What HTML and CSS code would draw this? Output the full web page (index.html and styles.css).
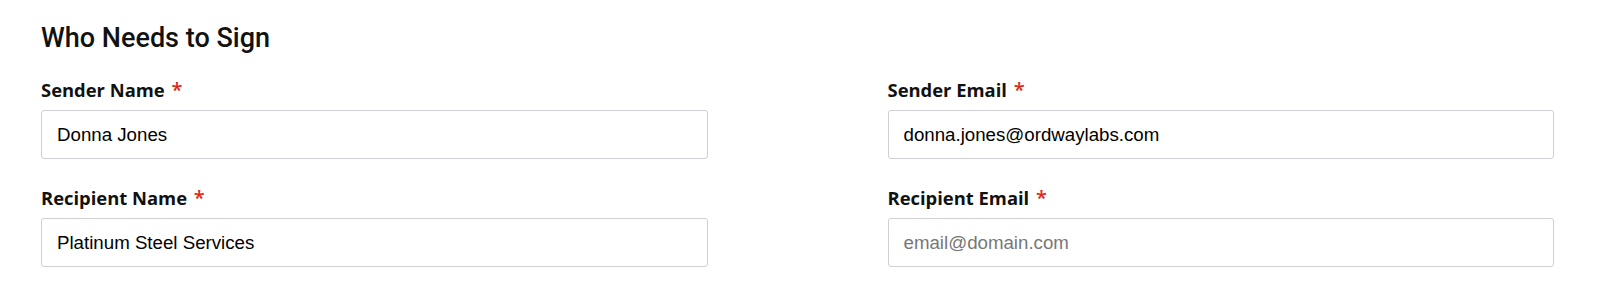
FILE: index.html
```html
<!DOCTYPE html>
<html lang="en">
<head>
<meta charset="utf-8">
<title>Who Needs to Sign</title>
<link rel="stylesheet" href="styles.css">
</head>
<body>
<section class="signers">
  <h2 class="signers-title">Who Needs to Sign</h2>
  <div class="signers-grid">
    <div class="field">
      <label class="field-label" for="sender-name">Sender Name <span class="req">*</span></label>
      <input class="field-input" id="sender-name" type="text" value="Donna Jones">
    </div>
    <div class="field">
      <label class="field-label" for="sender-email">Sender Email <span class="req">*</span></label>
      <input class="field-input" id="sender-email" type="email" value="donna.jones@ordwaylabs.com">
    </div>
    <div class="field">
      <label class="field-label" for="recipient-name">Recipient Name <span class="req">*</span></label>
      <input class="field-input" id="recipient-name" type="text" value="Platinum Steel Services">
    </div>
    <div class="field">
      <label class="field-label" for="recipient-email">Recipient Email <span class="req">*</span></label>
      <input class="field-input" id="recipient-email" type="email" placeholder="email@domain.com">
    </div>
  </div>
</section>
</body>
</html>
```

FILE: styles.css
```css
* {
  box-sizing: border-box;
}

html, body {
  margin: 0;
  background: #ffffff;
}

body {
  font-family: "Open Sans", "Liberation Sans", sans-serif;
  color: #111111;
}

.signers {
  padding: 22px 52px 0 41px;
}

.signers-title {
  margin: 0 0 24px;
  font-family: Roboto, "Liberation Sans", sans-serif;
  font-weight: 500;
  font-size: 27px;
  line-height: 32px;
  color: #111111;
}

.signers-grid {
  display: grid;
  grid-template-columns: 1fr 1fr;
  column-gap: 180px;
  row-gap: 27px;
}

.field {
  display: flex;
  flex-direction: column;
}

.field-label {
  display: block;
  margin-bottom: 8px;
  font-family: "Open Sans", sans-serif;
  font-weight: 700;
  font-size: 18.4px;
  line-height: 24px;
  color: #111111;
}

.req {
  margin-left: 2px;
  color: #e0251b;
  font-weight: 600;
  font-size: 20px;
}

.field-input {
  display: block;
  width: 100%;
  height: 49px;
  margin: 0;
  padding: 0 15px;
  border: 1px solid #cfcfd8;
  border-radius: 3px;
  background: #ffffff;
  font-family: "Liberation Sans", Arial, sans-serif;
  font-size: 18.7px;
  color: #000000;
  outline: none;
}

.field-input::placeholder {
  color: #777777;
  opacity: 1;
}
```
